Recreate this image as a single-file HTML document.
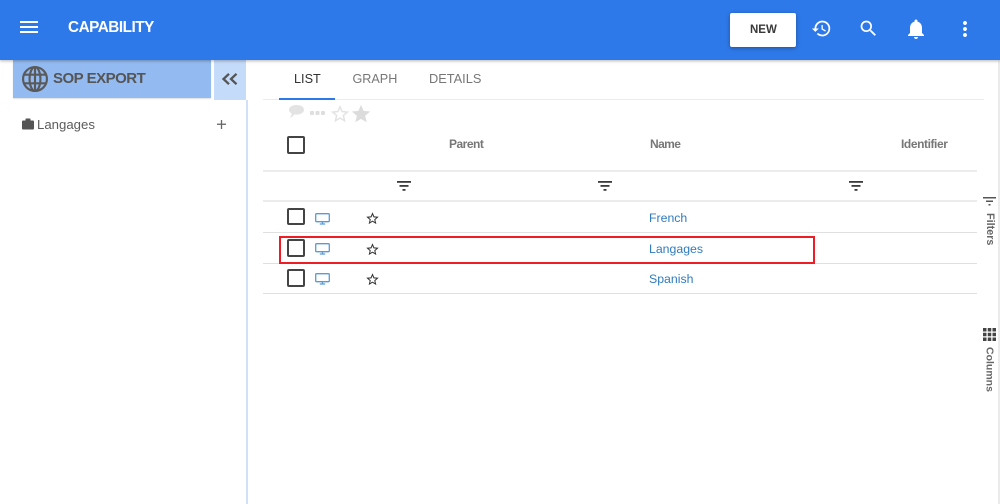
<!DOCTYPE html>
<html><head><meta charset="utf-8">
<style>
html,body{margin:0;padding:0;background:#fff}
body{width:1000px;height:504px;position:relative;overflow:hidden;font-family:"Liberation Sans",sans-serif}
.a{position:absolute}
.t{position:absolute;white-space:nowrap;line-height:1}
.h{height:1px;background:#e0e0e0;left:263px;width:714px;position:absolute}
.c{position:absolute;left:287px;width:13.5px;height:13.5px;border:2px solid #444;border-radius:2px}
svg{position:absolute;overflow:visible}
</style></head><body>
<div class="a" style="left:0;top:0;width:1000px;height:60px;background:#2e79e9;box-shadow:0 1px 3px rgba(0,0,0,.3);z-index:3"></div>
<div style="position:absolute;left:0;top:0;width:1000px;height:60px;z-index:4">
<svg style="left:17px;top:15px" width="24" height="24" viewBox="0 0 24 24" fill="#fff"><path d="M3 18h18v-2H3v2zm0-5h18v-2H3v2zm0-7v2h18V6H3z"/></svg>
<div class="t" style="left:68px;top:19.5px;font-size:15.3px;font-weight:bold;color:#fff;letter-spacing:-.48px">CAPABILITY</div>
<div class="a" style="left:730px;top:13px;width:66px;height:34px;background:#fff;border-radius:2px;box-shadow:0 1px 4px rgba(0,0,0,.35)"></div>
<div class="t" style="left:750px;top:25px;font-size:11.5px;font-weight:bold;color:#3a3a3a">NEW</div>
<svg style="left:810.500px;top:17.500px" width="21" height="21" viewBox="0 0 24 24" fill="#fff"><path d="M13 3a9 9 0 0 0-9 9H1l3.900 3.900L9 12H6a7 7 0 1 1 2.050 4.950l-1.420 1.420A9 9 0 1 0 13 3zm-1 5v5l4.250 2.520.770-1.280-3.520-2.090V8H12z"/></svg>
<svg style="left:857.500px;top:17.500px" width="21" height="21" viewBox="0 0 24 24" fill="#fff"><path d="M15.500 14h-.790l-.280-.270A6.470 6.470 0 0 0 16 9.500 6.500 6.500 0 1 0 9.500 16c1.610 0 3.090-.590 4.230-1.570l.270.280v.790l5 4.990L20.490 19l-4.990-5zm-6 0C7.010 14 5 11.990 5 9.500S7.010 5 9.500 5 14 7.010 14 9.500 11.990 14 9.500 14z"/></svg>
<svg style="left:904px;top:17px" width="24" height="24" viewBox="0 0 24 24" fill="#fff"><path d="M12 22c1.100 0 2-.9 2-2h-4c0 1.100.9 2 2 2zm6-6v-5c0-3.070-1.630-5.640-4.500-6.320V4c0-.830-.670-1.500-1.500-1.500s-1.500.670-1.500 1.500v.680C7.640 5.360 6 7.920 6 11v5l-2 2v1h16v-1l-2-2z"/></svg>
<svg style="left:952.500px;top:17px" width="24" height="24" viewBox="0 0 24 24" fill="#fff"><path d="M12 8c1.100 0 2-.9 2-2s-.9-2-2-2-2 .9-2 2 .9 2 2 2zm0 2c-1.100 0-2 .9-2 2s.9 2 2 2 2-.9 2-2-.9-2-2-2zm0 6c-1.100 0-2 .9-2 2s.9 2 2 2 2-.9 2-2-.9-2-2-2z"/></svg>
</div>

<div class="a" style="left:13px;top:60px;width:198px;height:38px;background:#93bbf2;box-shadow:0 1px 1px rgba(0,0,0,.12)"></div>
<svg style="left:22px;top:66px" width="26" height="26" viewBox="0 0 24 24" fill="none" stroke="#5a5a5a" stroke-width="2"><circle cx="12" cy="12" r="11"/><ellipse cx="12" cy="12" rx="5" ry="11"/><path d="M1.800 8h20.400M1.800 16h20.400M12 1v22"/></svg>
<div class="t" style="left:53px;top:71px;font-size:15px;font-weight:bold;color:#555;letter-spacing:-.5px">SOP EXPORT</div>
<div class="a" style="left:214px;top:60px;width:32px;height:40px;background:#c5dbfa"></div>
<svg style="left:222px;top:73px" width="15" height="12" viewBox="0 0 15 12" fill="none" stroke="#555" stroke-width="2.300"><path d="M7 .8 1.500 6 7 11.200M14.500 .8 9 6l5.500 5.200"/></svg>
<div class="a" style="left:246px;top:100px;width:2px;height:404px;background:#cfe0f8"></div>

<svg style="left:22px;top:118px" width="12" height="12" viewBox="0 0 12 12" fill="#555"><path d="M0 3.500Q0 2.500 1 2.500H3.500V1.200Q3.500 .5 4.200 .5H7.800Q8.500 .5 8.500 1.200V2.500H11Q12 2.500 12 3.500V10.500Q12 11.500 11 11.500H1Q0 11.500 0 10.500Z"/></svg>
<div class="t" style="left:37px;top:118px;font-size:13.2px;color:#5c5c5c">Langages</div>
<svg style="left:217px;top:120px" width="9" height="9" fill="#666"><rect x="0" y="3.600" width="9" height="1.300"/><rect x="3.850" y="0" width="1.300" height="9"/></svg>

<div class="t" style="left:294px;top:73px;font-size:12.7px;color:#333">LIST</div>
<div class="t" style="left:352.500px;top:73px;font-size:12.6px;color:#777">GRAPH</div>
<div class="t" style="left:429px;top:73px;font-size:12.8px;color:#777">DETAILS</div>
<div class="a" style="left:263px;top:98.500px;width:721px;height:1.500px;background:#ececec"></div>
<div class="a" style="left:279px;top:98px;width:56px;height:2px;background:#2e79e9"></div>

<svg style="left:288px;top:105px" width="17" height="14" viewBox="0 0 17 14" fill="#e3e3e3"><path d="M8.500 0C13 0 16 2 16 4.800S13 9.600 8.500 9.600Q7.500 9.600 6.500 9.400Q5 11.500 1.800 13Q3.500 10.500 3.500 8.500Q1 7 1 4.800C1 2 4 0 8.500 0Z"/></svg>
<svg style="left:310px;top:110.500px" width="15" height="5" fill="#dedede"><rect x="0" y="0" width="4" height="4" rx="1"/><rect x="5.500" y="0" width="4" height="4" rx="1"/><rect x="11" y="0" width="4" height="4" rx="1"/></svg>
<svg style="left:329px;top:102.500px" width="22" height="22" viewBox="0 0 24 24" fill="#e3e3e3"><path d="M22 9.240l-7.190-.62L12 2 9.190 8.630 2 9.240l5.460 4.730L5.820 21 12 17.270 18.180 21l-1.630-7.030L22 9.240zM12 15.400l-3.760 2.270 1-4.280-3.320-2.880 4.380-.38L12 6.100l1.710 4.040 4.380.38-3.320 2.880 1 4.280L12 15.400z"/></svg>
<svg style="left:350px;top:102.500px" width="22" height="22" viewBox="0 0 24 24" fill="#dcdcdc"><path d="M12 17.270 18.180 21l-1.640-7.030L22 9.240l-7.190-.61L12 2 9.190 8.630 2 9.240l5.460 4.730L5.820 21z"/></svg>

<div class="c" style="top:136px"></div>
<div class="t" style="left:449px;top:138px;font-size:12px;font-weight:bold;color:#777;letter-spacing:-.5px">Parent</div>
<div class="t" style="left:650px;top:138px;font-size:12px;font-weight:bold;color:#777;letter-spacing:-.6px">Name</div>
<div class="t" style="left:901px;top:138px;font-size:12px;font-weight:bold;color:#777;letter-spacing:-.42px">Identifier</div>

<div class="h" style="top:170px;height:1.500px;background:#ececec"></div>
<div class="h" style="top:200px;height:1.500px;background:#ececec"></div>
<div class="h" style="top:232px"></div>
<div class="h" style="top:263px"></div>
<div class="h" style="top:293px"></div>

<svg style="left:396.500px;top:181px" width="14" height="10" fill="#3c3c3c"><rect x="0" y="0" width="14" height="1.800"/><rect x="2.500" y="4" width="9" height="1.800"/><rect x="5.500" y="8" width="3" height="1.800"/></svg>
<svg style="left:598px;top:181px" width="14" height="10" fill="#3c3c3c"><rect x="0" y="0" width="14" height="1.800"/><rect x="2.500" y="4" width="9" height="1.800"/><rect x="5.500" y="8" width="3" height="1.800"/></svg>
<svg style="left:849px;top:181px" width="14" height="10" fill="#3c3c3c"><rect x="0" y="0" width="14" height="1.800"/><rect x="2.500" y="4" width="9" height="1.800"/><rect x="5.500" y="8" width="3" height="1.800"/></svg>

<div class="c" style="top:207.500px"></div>
<div class="c" style="top:239px"></div>
<div class="c" style="top:269px"></div>

<svg style="left:315px;top:212.500px" width="15" height="12" viewBox="0 0 15 12" fill="none" stroke="#5b9bd2" stroke-width="1.300"><rect x="0.700" y="0.700" width="13.600" height="8" rx="1"/><path d="M7.500 9v2M4.800 11h5.400"/></svg>
<svg style="left:315px;top:243px" width="15" height="12" viewBox="0 0 15 12" fill="none" stroke="#5b9bd2" stroke-width="1.300"><rect x="0.700" y="0.700" width="13.600" height="8" rx="1"/><path d="M7.500 9v2M4.800 11h5.400"/></svg>
<svg style="left:315px;top:273px" width="15" height="12" viewBox="0 0 15 12" fill="none" stroke="#5b9bd2" stroke-width="1.300"><rect x="0.700" y="0.700" width="13.600" height="8" rx="1"/><path d="M7.500 9v2M4.800 11h5.400"/></svg>

<svg style="left:365px;top:211px" width="15" height="15" viewBox="0 0 24 24" fill="#333"><path d="M22 9.240l-7.190-.62L12 2 9.190 8.630 2 9.240l5.460 4.730L5.820 21 12 17.270 18.180 21l-1.630-7.030L22 9.240zM12 15.400l-3.760 2.270 1-4.280-3.320-2.880 4.380-.38L12 6.100l1.710 4.040 4.380.38-3.320 2.880 1 4.280L12 15.400z"/></svg>
<svg style="left:365px;top:241.500px" width="15" height="15" viewBox="0 0 24 24" fill="#333"><path d="M22 9.240l-7.190-.62L12 2 9.190 8.630 2 9.240l5.460 4.730L5.820 21 12 17.270 18.180 21l-1.630-7.030L22 9.240zM12 15.400l-3.760 2.270 1-4.280-3.320-2.880 4.380-.38L12 6.100l1.710 4.040 4.380.38-3.320 2.880 1 4.280L12 15.400z"/></svg>
<svg style="left:365px;top:271.500px" width="15" height="15" viewBox="0 0 24 24" fill="#333"><path d="M22 9.240l-7.190-.62L12 2 9.190 8.630 2 9.240l5.460 4.730L5.820 21 12 17.270 18.180 21l-1.630-7.030L22 9.240zM12 15.400l-3.760 2.270 1-4.280-3.320-2.880 4.380-.38L12 6.100l1.710 4.040 4.380.38-3.320 2.880 1 4.280L12 15.400z"/></svg>

<div class="t" style="left:649px;top:212px;font-size:12.300px;color:#2f7cbd">French</div>
<div class="t" style="left:649px;top:243px;font-size:12.300px;color:#2f7cbd">Langages</div>
<div class="t" style="left:649px;top:273px;font-size:12.300px;color:#2f7cbd">Spanish</div>

<div class="a" style="left:278.500px;top:235.500px;width:532.500px;height:24.500px;border:2.500px solid #ee1c25"></div>

<div class="a" style="left:998px;top:60px;width:2px;height:444px;background:#ebebeb"></div>
<svg style="left:983px;top:197px" width="13" height="10" fill="#555"><rect x="0" y="0" width="13" height="1.500"/><rect x="3" y="3.500" width="7" height="1.500"/><rect x="5.500" y="7" width="2" height="1.500"/></svg>
<div class="t" style="left:984px;top:213px;font-size:10.800px;font-weight:bold;color:#666;writing-mode:vertical-rl">Filters</div>
<svg style="left:983px;top:328px" width="13" height="13" fill="#444"><rect x="0" y="0" width="3.500" height="3.500"/><rect x="4.750" y="0" width="3.500" height="3.500"/><rect x="9.500" y="0" width="3.500" height="3.500"/><rect x="0" y="4.750" width="3.500" height="3.500"/><rect x="4.750" y="4.750" width="3.500" height="3.500"/><rect x="9.500" y="4.750" width="3.500" height="3.500"/><rect x="0" y="9.500" width="3.500" height="3.500"/><rect x="4.750" y="9.500" width="3.500" height="3.500"/><rect x="9.500" y="9.500" width="3.500" height="3.500"/></svg>
<div class="t" style="left:984px;top:347px;font-size:10.500px;font-weight:bold;color:#666;writing-mode:vertical-rl">Columns</div>
</body></html>
